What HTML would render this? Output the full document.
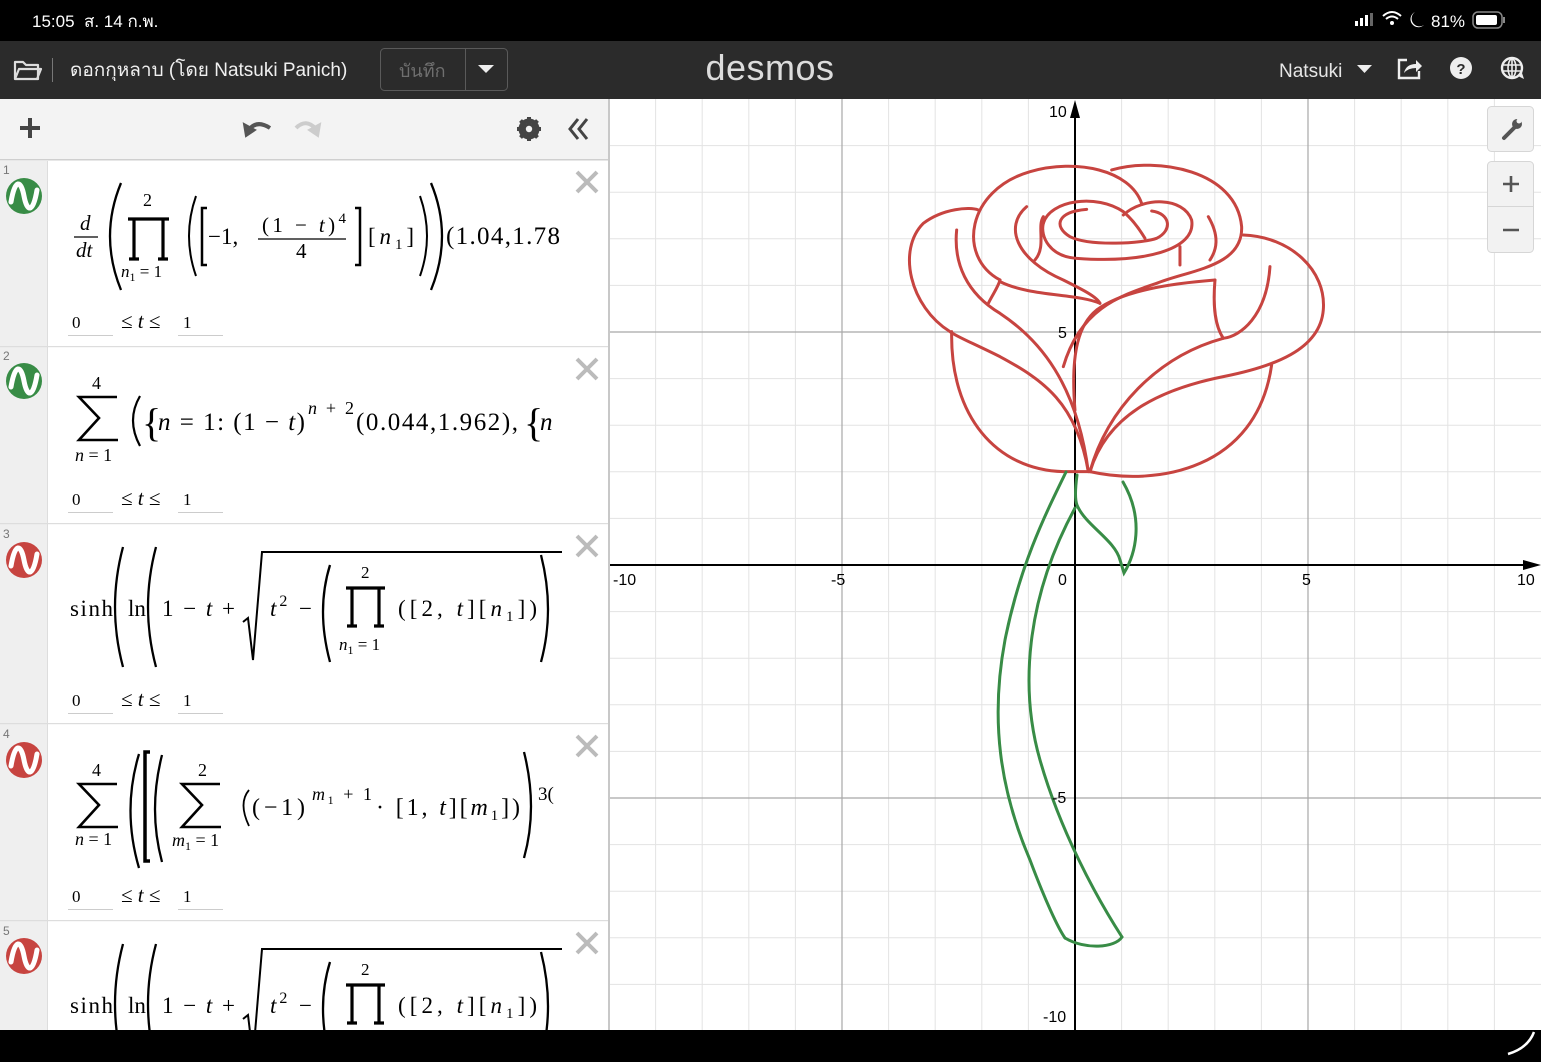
<!DOCTYPE html>
<html><head><meta charset="utf-8"><style>
html,body{margin:0;padding:0;background:#000;overflow:hidden}
svg{display:block}
.m{font-family:"Liberation Serif",serif;fill:#000}
.i{font-style:italic}
.u{font-family:"Liberation Sans",sans-serif}
</style></head><body>
<svg width="1541" height="1062" viewBox="0 0 1541 1062" xmlns="http://www.w3.org/2000/svg">
<defs>
<clipPath id="gc"><rect x="610" y="99" width="931" height="931"/></clipPath>
<clipPath id="ec"><rect x="48" y="160" width="514" height="870"/></clipPath>
<g id="wave"><path d="M-13,6 C-9,-18 -3,-16 0,0 C3,16 9,18 13,-6" fill="none" stroke="#fff" stroke-width="5" stroke-linecap="round"/></g>
<g id="xx"><path d="M-10,-10 L10,10 M10,-10 L-10,10" stroke="#bbb" stroke-width="4"/></g>
</defs>
<rect x="0" y="0" width="1541" height="41" fill="#000"/>
<text x="32" y="27" class="u" font-size="17" fill="#fff" font-family="Liberation Sans, Noto Sans CJK SC, sans-serif">15:05 &#160;ส. 14 ก.พ.</text>
<g fill="#fff"><rect x="1355" y="21" width="3" height="5"/><rect x="1360" y="18" width="3" height="8"/><rect x="1365" y="15" width="3" height="11"/><rect x="1370" y="13" width="3" height="13" fill="#666"/></g>
<path d="M1383,16 Q1392,8 1401,16 M1386,19 Q1392,14 1398,19" stroke="#fff" stroke-width="2" fill="none"/><circle cx="1392" cy="23" r="2" fill="#fff"/>
<path d="M1415,12 A8,8 0 1,0 1424,25 A7,7 0 0,1 1415,12Z" fill="#fff"/>
<text x="1431" y="27" class="u" font-size="17" fill="#fff">81%</text>
<rect x="1473" y="12" width="29" height="16" rx="5" fill="none" stroke="#888" stroke-width="1.5"/><rect x="1476" y="15" width="21" height="10" rx="2" fill="#fff"/><rect x="1503" y="17" width="2" height="6" fill="#888"/>
<rect x="0" y="41" width="1541" height="58" fill="#2b2b2b"/>
<path d="M15,62 h8 l3,3 h12 v14 h-23z M15,79 l4,-10 h22 l-4,10" stroke="#ddd" stroke-width="2.2" fill="none" stroke-linejoin="round"/>
<rect x="52" y="58" width="1" height="24" fill="#777"/>
<text x="70" y="76" class="u" font-size="19" fill="#f0f0f0" font-family="Liberation Sans, Noto Sans CJK SC, sans-serif">ดอกกุหลาบ (โดย Natsuki Panich)</text>
<rect x="380.5" y="48.5" width="127" height="42" rx="4" fill="none" stroke="#5a5a5a"/>
<rect x="465" y="49" width="1" height="41" fill="#5a5a5a"/>
<text x="399" y="77" class="u" font-size="18" fill="#6f6f6f" font-family="Liberation Sans, Noto Sans CJK SC, sans-serif">บันทึก</text>
<path d="M478,65 h16 l-8,8z" fill="#eee"/>
<text x="770" y="80" text-anchor="middle" class="u" font-size="36" fill="#dcdcdc" letter-spacing="0.5">desmos</text>
<text x="1279" y="77" class="u" font-size="19" fill="#e6e6e6">Natsuki</text>
<path d="M1357,65 h15 l-7.5,8z" fill="#eee"/>
<path d="M1407,60 h-8 v18 h20 v-7" stroke="#eee" stroke-width="2.4" fill="none"/><path d="M1404,73 q2,-9 12,-9 v-4 l6,6 -6,6 v-4 q-8,0 -12,5z" fill="#eee"/>
<circle cx="1461" cy="68" r="11" fill="#eee"/><text x="1461" y="74" text-anchor="middle" class="u" font-size="15" font-weight="bold" fill="#2b2b2b">?</text>
<circle cx="1512" cy="68" r="10" fill="none" stroke="#eee" stroke-width="2.4"/><ellipse cx="1512" cy="68" rx="4" ry="9" fill="none" stroke="#eee" stroke-width="1.6"/><path d="M1503,65 h18 M1503,71 h18 M1512,59 v18" stroke="#eee" stroke-width="1.6"/><path d="M1518,76 l6,3 -2,-6z" fill="#eee"/>
<rect x="0" y="99" width="609" height="931" fill="#fff"/>
<rect x="0" y="99" width="609" height="61" fill="#f3f3f3"/>
<rect x="0" y="159" width="609" height="1.5" fill="#cfcfcf"/>
<path d="M30,118 v20 M20,128 h20" stroke="#444" stroke-width="4"/>
<path d="M248,131 q8,-12 22,-3" stroke="#555" stroke-width="4" fill="none"/><path d="M244,124 l2,12 9,-6z" fill="#555" stroke="#555" stroke-width="2"/>
<path d="M296,128 q10,-10 20,1" stroke="#ccc" stroke-width="4" fill="none"/><path d="M320,124 l-2,12 -9,-6z" fill="#ccc" stroke="#ccc" stroke-width="2"/>
<g transform="translate(529,129)"><circle r="8" fill="none" stroke="#444" stroke-width="5"/><g stroke="#444" stroke-width="4"><path d="M0,-12 v24 M-12,0 h24 M-8.5,-8.5 l17,17 M8.5,-8.5 l-17,17"/></g><circle r="3.2" fill="#f3f3f3"/></g>
<path d="M578,119 l-8,10 8,10 M587,119 l-8,10 8,10" stroke="#444" stroke-width="3" fill="none"/>
<rect x="0" y="161" width="48" height="869" fill="#efefef"/>
<rect x="47" y="161" width="1" height="869" fill="#ddd"/>
<rect x="0" y="346" width="609" height="1.2" fill="#ddd"/>
<rect x="0" y="523" width="609" height="1.2" fill="#ddd"/>
<rect x="0" y="723" width="609" height="1.2" fill="#ddd"/>
<rect x="0" y="920" width="609" height="1.2" fill="#ddd"/>
<rect x="608" y="99" width="2" height="931" fill="#c8c8c8"/>
<g class="u" font-size="12" fill="#777"><text x="3" y="174">1</text><text x="3" y="360">2</text><text x="3" y="538">3</text><text x="3" y="738">4</text><text x="3" y="935">5</text></g>
<circle cx="24" cy="196" r="18" fill="#388c46"/><use href="#wave" x="24" y="196"/>
<circle cx="24" cy="381" r="18" fill="#388c46"/><use href="#wave" x="24" y="381"/>
<circle cx="24" cy="560" r="18" fill="#c74440"/><use href="#wave" x="24" y="560"/>
<circle cx="24" cy="760" r="18" fill="#c74440"/><use href="#wave" x="24" y="760"/>
<circle cx="24" cy="956" r="18" fill="#c74440"/><use href="#wave" x="24" y="956"/>
<use href="#xx" x="587" y="182"/><use href="#xx" x="587" y="369"/><use href="#xx" x="587" y="546"/><use href="#xx" x="587" y="746"/><use href="#xx" x="587" y="943"/>
<g clip-path="url(#ec)" fill="none" stroke="#000">
<g class="m" stroke="none">
<text x="80" y="230" class="m i" font-size="21">d</text>
<text x="76" y="257" class="m i" font-size="21">dt</text>
<text x="143" y="206" font-size="18" class="m">2</text>
<text x="121" y="277" font-size="17" class="m"><tspan class="i">n</tspan><tspan font-size="12" dy="4">1</tspan><tspan dy="-4"> = 1</tspan></text>
<text x="208" y="244" font-size="23" class="m">−1,</text>
<text x="262" y="232" font-size="21" class="m" textLength="84" lengthAdjust="spacing">(1 − <tspan class="i">t</tspan>)<tspan font-size="15" dy="-9">4</tspan></text>
<text x="296" y="258" font-size="21" class="m">4</text>
<text x="368" y="244" font-size="23" class="m" textLength="46" lengthAdjust="spacing">[<tspan class="i">n</tspan><tspan font-size="15" dy="5">1</tspan><tspan dy="-5">]</tspan></text>
<text x="446" y="244" font-size="25" class="m" textLength="114" lengthAdjust="spacing">(1.04,1.78</text>
</g>
<path d="M74,237 h24" stroke-width="1.3"/>
<path d="M121,183 Q99,236 121,290" stroke-width="2.3"/>
<path d="M128,219 h41 M134,219 v40 M163,219 v40 M129,259 h10 M158,259 h10" stroke-width="3.2"/>
<path d="M196,196 Q182,236 196,276" stroke-width="2"/>
<path d="M207,208 h-5 v57 h5" stroke-width="2.5"/>
<path d="M258,239 h88" stroke-width="1.3"/>
<path d="M355,208 h5 v57 h-5" stroke-width="2.5"/>
<path d="M420,196 Q434,236 420,276" stroke-width="2"/>
<path d="M431,183 Q453,236 431,290" stroke-width="2.3"/>
<g stroke="none">
<text x="92" y="389" font-size="18" class="m">4</text>
<text x="75" y="461" font-size="18" class="m"><tspan class="i">n</tspan> = 1</text>
<text x="142" y="436" font-size="40" class="m">{</text>
<text x="158" y="430" font-size="25" class="m" textLength="147" lengthAdjust="spacing"><tspan class="i">n</tspan> = 1: (1 − <tspan class="i">t</tspan>)</text>
<text x="308" y="414" font-size="18" class="m" textLength="46" lengthAdjust="spacing"><tspan class="i">n</tspan> + 2</text>
<text x="356" y="430" font-size="25" class="m" textLength="162" lengthAdjust="spacing">(0.044,1.962),</text>
<text x="524" y="436" font-size="40" class="m">{</text>
<text x="540" y="430" font-size="25" class="m i">n</text>
</g>
<path d="M117,397 h-38 l20,21 -20,22 h39" stroke-width="2.6" stroke-linejoin="miter"/>
<path d="M140,396 Q126,420 140,446" stroke-width="2.2"/>
<g id="sinh">
<g stroke="none">
<text x="70" y="616" font-size="23" class="m" textLength="43" lengthAdjust="spacing">sinh</text>
<text x="128" y="616" font-size="23" class="m">ln</text>
<text x="162" y="616" font-size="23" class="m" textLength="73" lengthAdjust="spacing">1 − <tspan class="i">t</tspan> +</text>
<text x="270" y="616" font-size="23" class="m" textLength="42" lengthAdjust="spacing"><tspan class="i">t</tspan><tspan font-size="16" dy="-10">2</tspan><tspan dy="10"> −</tspan></text>
<text x="361" y="578" font-size="17" class="m">2</text>
<text x="339" y="650" font-size="17" class="m"><tspan class="i">n</tspan><tspan font-size="12" dy="4">1</tspan><tspan dy="-4"> = 1</tspan></text>
<text x="398" y="616" font-size="23" class="m" textLength="139" lengthAdjust="spacing">([2, <tspan class="i">t</tspan>][<tspan class="i">n</tspan><tspan font-size="15" dy="5">1</tspan><tspan dy="-5">])</tspan></text>
</g>
<path d="M123,547 Q107,607 123,667" stroke-width="2.3"/>
<path d="M156,547 Q140,607 156,667" stroke-width="2.3"/>
<path d="M243,622 l5,-4 5,42 9,-108 h300" stroke-width="2"/>
<path d="M330,565 Q316,610 330,662" stroke-width="2.3"/>
<path d="M346,588 h39 M352,588 v38 M379,588 v38 M347,626 h10 M374,626 h10" stroke-width="3.2"/>
<path d="M541,555 Q555,610 541,662" stroke-width="2.3"/>
</g>
<use href="#sinh" y="397"/>
<g stroke="none">
<text x="92" y="776" font-size="18" class="m">4</text>
<text x="75" y="845" font-size="18" class="m"><tspan class="i">n</tspan> = 1</text>
<text x="198" y="776" font-size="18" class="m">2</text>
<text x="172" y="846" font-size="18" class="m"><tspan class="i">m</tspan><tspan font-size="12" dy="4">1</tspan><tspan dy="-4"> = 1</tspan></text>
<text x="252" y="815" font-size="24" class="m" textLength="53" lengthAdjust="spacing">(−1)</text>
<text x="312" y="800" font-size="18" class="m" textLength="60" lengthAdjust="spacing"><tspan class="i">m</tspan><tspan font-size="12" dy="4">1</tspan><tspan dy="-4"> + 1</tspan></text>
<text x="376" y="815" font-size="24" class="m" textLength="144" lengthAdjust="spacing">· [1, <tspan class="i">t</tspan>][<tspan class="i">m</tspan><tspan font-size="15" dy="5">1</tspan><tspan dy="-5">])</tspan></text>
<text x="538" y="800" font-size="19" class="m">3(</text>
</g>
<path d="M117,784 h-38 l20,21 -20,22 h39" stroke-width="2.6"/>
<path d="M220,784 h-38 l20,21 -20,22 h39" stroke-width="2.6"/>
<path d="M139,754 Q122,810 139,868" stroke-width="2.3"/>
<path d="M150,752 h-5 v109 h5" stroke-width="3.5"/>
<path d="M162,755 Q148,810 162,862" stroke-width="2.3"/>
<path d="M249,790 Q238,803 249,826" stroke-width="1.8"/>
<path d="M524,752 Q538,808 524,858" stroke-width="2.3"/>
</g>
<g id="rng">
<text x="72" y="328" font-size="17" class="m" fill="#aaa" stroke="none">0</text>
<text x="121" y="328" font-size="21" class="m" stroke="none">≤ <tspan class="i">t</tspan> ≤</text>
<text x="183" y="328" font-size="17" class="m" fill="#aaa" stroke="none">1</text>
<rect x="68" y="335" width="45" height="1" fill="#ccc"/><rect x="178" y="335" width="45" height="1" fill="#ccc"/>
</g>
<use href="#rng" y="177"/><use href="#rng" y="378"/><use href="#rng" y="574"/>
<rect x="610" y="99" width="931" height="931" fill="#fff"/>
<g clip-path="url(#gc)">
<g stroke="#e3e3e3" stroke-width="1">
<path d="M655.6,99v931M702.2,99v931M748.8,99v931M795.4,99v931M888.6,99v931M935.2,99v931M981.8,99v931M1028.4,99v931M1121.6,99v931M1168.2,99v931M1214.8,99v931M1261.4,99v931M1354.6,99v931M1401.2,99v931M1447.8,99v931M1494.4,99v931"/>
<path d="M610,145.6h931M610,192.2h931M610,238.8h931M610,285.4h931M610,378.6h931M610,425.2h931M610,471.8h931M610,518.4h931M610,611.6h931M610,658.2h931M610,704.8h931M610,751.4h931M610,844.6h931M610,891.2h931M610,937.8h931M610,984.4h931"/>
</g>
<g stroke="#a8a8a8" stroke-width="1.2"><path d="M842,99v931M1308,99v931M610,332h931M610,798h931"/></g>
<path d="M1075,112v918M610,565h918" stroke="#000" stroke-width="2"/>
<path d="M1075,100 l-5,18 h10z M1541,565 l-18,-5 v10z" fill="#000"/>
<g fill="none" stroke="#c74440" stroke-width="9" stroke-linecap="round" transform="translate(890,150) scale(0.3333)">
<path d="M595,965 C560,760 460,690 330,620 C250,580 200,560 180,545 C60,470 20,300 100,220 C160,175 240,170 265,180"/>
<path d="M200,240 C190,340 230,430 330,490 C450,570 560,700 595,965"/>
<path d="M295,460 C310,430 325,410 330,390"/>
<path d="M185,545 C180,800 320,960 520,965 L600,965"/>
<path d="M600,965 C800,1010 1100,960 1145,645"/>
<path d="M1060,255 C1200,260 1310,360 1300,480 C1290,600 1150,650 1000,680 C800,720 650,800 600,965"/>
<path d="M1140,350 C1130,500 1050,560 1000,565 C800,620 650,780 600,965"/>
<path d="M1000,565 C970,520 970,450 975,390"/>
<path d="M330,390 C200,320 230,120 420,65 C560,25 720,60 755,160"/>
<path d="M665,60 C800,20 1040,60 1055,230 C1060,350 900,360 800,400 C680,440 570,480 520,650"/>
<path d="M330,395 C420,440 560,430 630,460"/>
<path d="M410,170 C340,230 380,330 520,390 C580,420 620,440 630,460"/>
<path d="M975,390 C850,400 700,420 620,480 C570,520 540,600 555,780"/>
<path d="M435,330 C470,290 440,230 460,200"/>
<path d="M460,220 C480,150 620,130 700,185 C730,210 750,240 765,265"/>
<path d="M700,195 C760,140 880,140 905,210 C920,300 760,340 560,325 C480,320 450,260 460,220"/>
<path d="M870,290 L870,345"/>
<path d="M955,200 C990,260 980,300 960,330"/>
<path d="M590,178 C500,185 490,230 540,260 C600,290 760,280 800,265 C850,240 840,190 785,183"/>
</g>
<g fill="none" stroke="#388c46" stroke-width="3" stroke-linecap="round">
<path d="M1066,472 C1045,515 1020,565 1005,640 C990,720 1000,790 1030,860 C1045,900 1058,928 1065,938"/>
<path d="M1065,938 C1085,950 1115,948 1122,937"/>
<path d="M1122,937 C1095,895 1060,830 1040,760 C1020,690 1025,600 1075,508"/>
<path d="M1077,475 C1075,490 1075,500 1077,505 C1085,525 1115,540 1120,560 L1124,573 C1135,555 1145,520 1123,482"/>
</g>
<g class="u" font-size="16" fill="#000">
<text x="1049" y="117">10</text><text x="1058" y="338">5</text>
<text x="613" y="585">-10</text><text x="831" y="585">-5</text><text x="1058" y="585">0</text><text x="1302" y="585">5</text><text x="1517" y="585">10</text>
<text x="1052" y="803">-5</text><text x="1043" y="1022">-10</text>
</g>
<rect x="1487.5" y="106.5" width="46" height="45" rx="4" fill="#f2f2f2" stroke="#d6d6d6"/>
<path d="M1504,138 l12,-12" stroke="#555" stroke-width="4" stroke-linecap="round"/><circle cx="1517" cy="124" r="5" fill="#555"/><circle cx="1519" cy="121" r="2.5" fill="#f2f2f2"/>
<rect x="1487.5" y="161.5" width="46" height="91" rx="4" fill="#f2f2f2" stroke="#d6d6d6"/>
<rect x="1488" y="206" width="45" height="1" fill="#d6d6d6"/>
<path d="M1511,176 v16 M1503,184 h16 M1503,230 h16" stroke="#555" stroke-width="2.6"/>
</g>
<rect x="0" y="1030" width="1541" height="32" fill="#000"/>
<path d="M1508,1054 Q1528,1048 1534,1032" stroke="#fff" stroke-width="2.5" fill="none"/>
</svg>
</body></html>
